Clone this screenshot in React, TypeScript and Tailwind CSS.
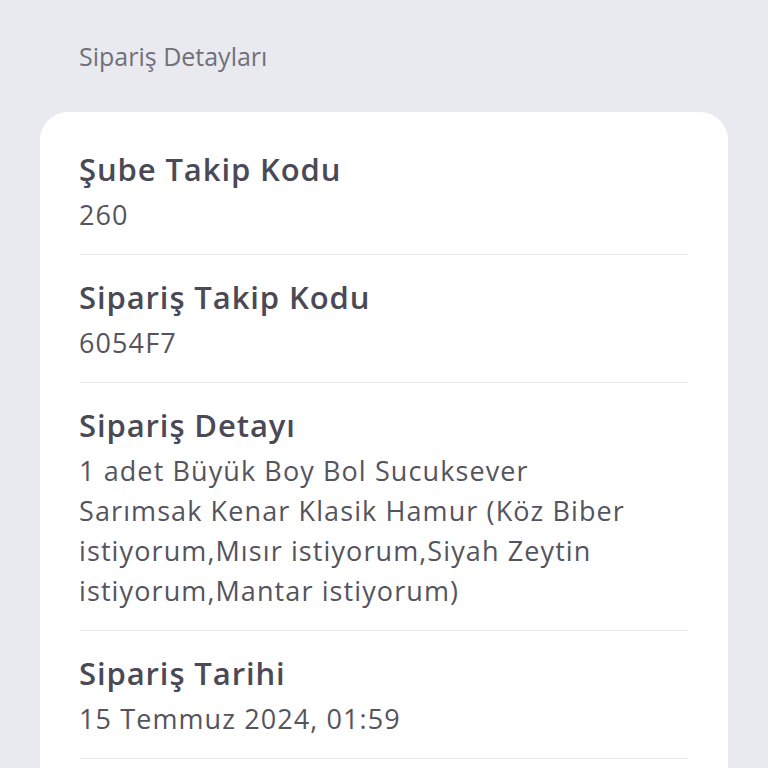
export default function App() {
  const rows = [
    { label: "Şube Takip Kodu", value: "260" },
    { label: "Sipariş Takip Kodu", value: "6054F7" },
    {
      label: "Sipariş Detayı",
      value:
        "1 adet Büyük Boy Bol Sucuksever Sarımsak Kenar Klasik Hamur (Köz Biber istiyorum,Mısır istiyorum,Siyah Zeytin istiyorum,Mantar istiyorum)",
    },
    { label: "Sipariş Tarihi", value: "15 Temmuz 2024, 01:59" },
  ];

  return (
    <div className="h-[768px] bg-[#e9eaef] font-['Open_Sans',sans-serif] overflow-hidden">
      <div className="px-[40px] pt-[40px]">
        <h2 className="pl-[39px] text-[25px] leading-[32px] text-[#717079]">Sipariş Detayları</h2>

        <div className="mt-[40px] rounded-[28px] bg-white px-[39px] pt-[15px] pb-[60px]">
          {rows.map((row, i) => (
            <div key={i} className="border-b border-[#ebebef] pt-[24px] pb-[19px]">
              <div className="text-[31px] leading-[36px] font-semibold tracking-[0.9px] text-[#4a4955]">{row.label}</div>
              <div className="mt-[8px] max-w-[560px] text-[27px] leading-[40px] tracking-[1.1px] text-[#55545e]">{row.value}</div>
            </div>
          ))}
        </div>
      </div>
    </div>
  );
}
